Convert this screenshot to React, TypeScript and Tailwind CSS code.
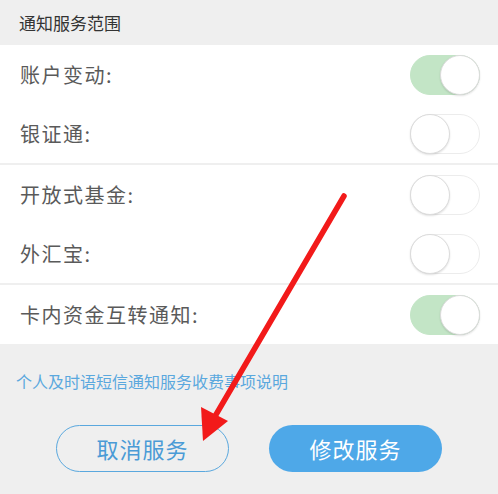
import React, { useState } from 'react';

type Item = { label: string; on: boolean };

const groups: Item[][] = [
  [
    { label: '账户变动:', on: true },
    { label: '银证通:', on: false },
  ],
  [
    { label: '开放式基金:', on: false },
    { label: '外汇宝:', on: false },
  ],
  [{ label: '卡内资金互转通知:', on: true }],
];

const Toggle: React.FC<{ on: boolean; onClick: () => void }> = ({ on, onClick }) => (
  <button
    onClick={onClick}
    className={`relative w-[70px] h-[40px] rounded-full border ${
      on ? 'bg-[#c3e5c6] border-[#c3e5c6]' : 'bg-white border-[#ececec]'
    }`}
  >
    <span
      className={`absolute top-[-1px] w-[40px] h-[40px] rounded-full bg-white border border-[#dcdcdc] shadow-[0_1px_2px_rgba(0,0,0,0.12)] ${
        on ? 'right-[-1px]' : 'left-[-1px]'
      }`}
    />
  </button>
);

export default function App() {
  const [state, setState] = useState(groups.map((g) => g.map((i) => i.on)));

  const flip = (gi: number, ii: number) =>
    setState((s) => s.map((g, a) => g.map((v, b) => (a === gi && b === ii ? !v : v))));

  return (
    <div
      className="relative w-[498px] h-[494px] bg-[#efefef] overflow-hidden"
      style={{ fontFamily: '"Noto Sans CJK SC", "Liberation Sans", sans-serif' }}
    >
      {/* Header */}
      <div className="h-[45px] flex items-center px-[19px] text-[17px] text-[#333]">通知服务范围</div>

      {/* Groups */}
      <div className="flex flex-col gap-[2px]">
        {groups.map((g, gi) => (
          <div key={gi} className="bg-white">
            {g.map((item, ii) => (
              <div key={ii} className="h-[59px] flex items-center justify-between pl-[20px] pr-[18px]">
                <span className="text-[20px] text-[#5a5a5a] tracking-[1.5px]">{item.label}</span>
                <Toggle on={state[gi][ii]} onClick={() => flip(gi, ii)} />
              </div>
            ))}
          </div>
        ))}
      </div>

      {/* Link */}
      <div className="pt-[25px] pl-[16px] text-[16px] text-[#5aa8de]">个人及时语短信通知服务收费事项说明</div>

      {/* Buttons */}
      <div className="flex justify-center gap-[40px] mt-[32px]">
        <button className="w-[173px] h-[47px] rounded-full border-[1.5px] border-[#5aa8de] text-[#4a9bd6] text-[22px] tracking-[1px] bg-transparent">
          取消服务
        </button>
        <button className="w-[173px] h-[47px] rounded-full bg-[#4ea8e8] text-white text-[22px] tracking-[1px]">
          修改服务
        </button>
      </div>

      {/* Red arrow annotation */}
      <svg className="absolute inset-0 pointer-events-none" width="498" height="494" viewBox="0 0 498 494">
        <line x1="344" y1="196" x2="214" y2="418" stroke="#f21a1a" strokeWidth="5.5" strokeLinecap="round" />
        <polygon points="203,441 201,407 228,421" fill="#f21a1a" />
      </svg>
    </div>
  );
}
